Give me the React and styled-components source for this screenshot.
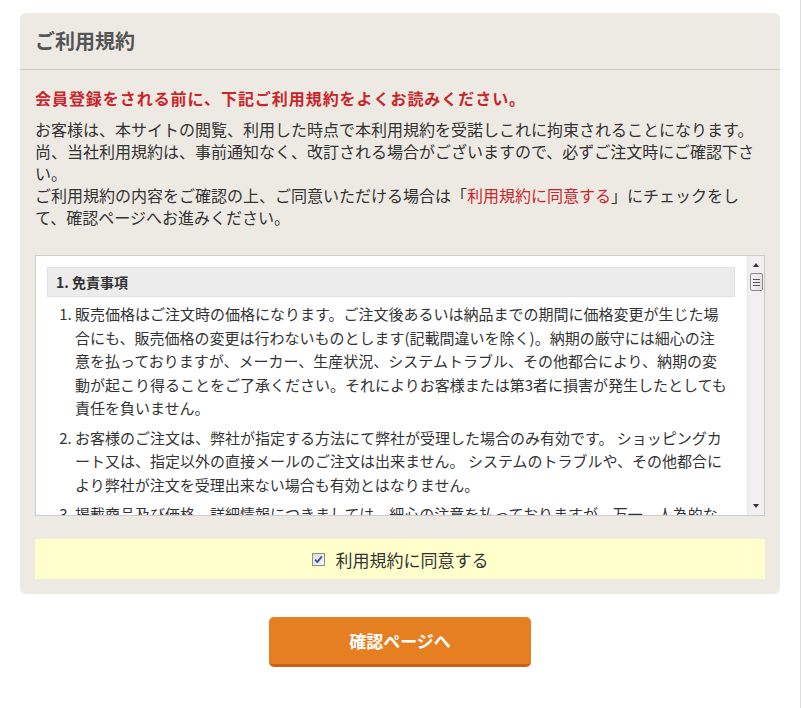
import React from 'react';
import styled, { createGlobalStyle } from 'styled-components';

const GlobalStyle = createGlobalStyle`
  html, body {
    margin: 0;
    padding: 0;
    background: #fff;
  }
  body {
    font-family: "Noto Sans CJK JP", "Noto Sans", sans-serif;
    color: #333;
  }
`;

const Page = styled.div`
  width: 760px;
  height: 708px;
  padding: 13px 20px 0;
  border-right: 1px solid #dcdcdc;
  box-sizing: content-box;
`;

const Panel = styled.section`
  background: #edeae3;
  border-radius: 6px;
`;

const PanelHeader = styled.h2`
  margin: 0;
  padding: 14px 15px;
  font-size: 20px;
  line-height: 28px;
  font-weight: bold;
  color: #555;
  border-bottom: 1px solid #cdc9c2;
`;

const PanelBody = styled.div`
  padding: 16px 15px 15px;
`;

const Warning = styled.p`
  margin: 0;
  font-size: 16px;
  line-height: 24px;
  font-weight: bold;
  letter-spacing: 0.95px;
  color: #c9252b;
`;

const Lead = styled.p`
  margin: 8px 0 0;
  font-size: 16px;
  line-height: 22px;
  color: #333;
`;

const Accent = styled.span`
  color: #c9252b;
`;

const ScrollBox = styled.div`
  display: flex;
  margin-top: 27px;
  height: 259px;
  background: #fff;
  border: 1px solid #cccccc;
`;

const ScrollContent = styled.div`
  flex: 1;
  overflow: hidden;
  padding: 11px 12px 0 11px;
`;

const TermsHeading = styled.h3`
  margin: 0;
  height: 28px;
  padding: 0 8px;
  line-height: 28px;
  font-size: 14px;
  font-weight: bold;
  color: #333;
  background: #ececec;
  border: 1px solid #e0e0e0;
`;

const TermsList = styled.ol`
  margin: 5px 0 0;
  padding: 0 7px 0 28px;
`;

const TermsItem = styled.li`
  font-size: 15px;
  line-height: 23.5px;
  color: #333;
  & + & {
    margin-top: 6px;
  }
`;

const ScrollTrack = styled.div`
  width: 17px;
  display: flex;
  flex-direction: column;
  align-items: center;
  background: #f0f0f0;
  border-left: 1px solid #e6e6e6;
  box-sizing: border-box;
`;

const Arrow = styled.span`
  width: 0;
  height: 0;
  margin: ${p => (p.$down ? 'auto 0 7px' : '7px 0 0')};
  border-left: 3.5px solid transparent;
  border-right: 3.5px solid transparent;
  ${p => (p.$down ? 'border-top: 4px solid #333;' : 'border-bottom: 4px solid #333;')}
`;

const Thumb = styled.span`
  margin-top: 6px;
  width: 13px;
  height: 18px;
  box-sizing: border-box;
  border: 1px solid #8a8a8a;
  border-radius: 2px;
  background: linear-gradient(to right, #f4f4f4, #e2e2e2);
  display: flex;
  flex-direction: column;
  justify-content: center;
  align-items: center;
  gap: 2px;
`;

const Grip = styled.span`
  width: 7px;
  height: 1px;
  background: #555;
`;

const AgreeRow = styled.label`
  margin-top: 23px;
  height: 40px;
  display: flex;
  align-items: center;
  justify-content: center;
  gap: 11px;
  background: #ffffcc;
  font-size: 17px;
  color: #333;
`;

const CheckBox = styled.span`
  width: 13px;
  height: 13px;
  box-sizing: border-box;
  border: 1px solid #8e8f8f;
  background: linear-gradient(135deg, #dcdcdc, #fbfbfb);
  display: flex;
  align-items: center;
  justify-content: center;
`;

const Actions = styled.div`
  display: flex;
  justify-content: center;
  padding-top: 23px;
`;

const SubmitButton = styled.button`
  width: 262px;
  height: 50px;
  border: none;
  border-bottom: 3px solid #c4621a;
  border-radius: 5px;
  background: #e67e22;
  color: #fff;
  font-family: inherit;
  font-size: 17px;
  font-weight: bold;
  cursor: pointer;
`;

const terms = [
  '販売価格はご注文時の価格になります。ご注文後あるいは納品までの期間に価格変更が生じた場合にも、販売価格の変更は行わないものとします(記載間違いを除く)。納期の厳守には細心の注意を払っておりますが、メーカー、生産状況、システムトラブル、その他都合により、納期の変動が起こり得ることをご了承ください。それによりお客様または第3者に損害が発生したとしても責任を負いません。',
  'お客様のご注文は、弊社が指定する方法にて弊社が受理した場合のみ有効です。 ショッピングカート又は、指定以外の直接メールのご注文は出来ません。 システムのトラブルや、その他都合により弊社が注文を受理出来ない場合も有効とはなりません。',
  '掲載商品及び価格、詳細情報につきましては、細心の注意を払っておりますが、万一、人為的な誤りがあった場合には、訂正させていただく場合がございます。',
  '商品の色合いは、お使いのモニター環境により実物と異なって見える場合がございます。'
];

function App() {
  return (
    <Page>
      <GlobalStyle />
      <Panel>
        <PanelHeader>ご利用規約</PanelHeader>
        <PanelBody>
          <Warning>会員登録をされる前に、下記ご利用規約をよくお読みください。</Warning>
          <Lead>
            お客様は、本サイトの閲覧、利用した時点で本利用規約を受諾しこれに拘束されることになります。
            <br />
            尚、当社利用規約は、事前通知なく、改訂される場合がございますので、必ずご注文時にご確認下さい。
            <br />
            ご利用規約の内容をご確認の上、ご同意いただける場合は「<Accent>利用規約に同意する</Accent>」にチェックをして、確認ページへお進みください。
          </Lead>

          <ScrollBox>
            <ScrollContent>
              <TermsHeading>1. 免責事項</TermsHeading>
              <TermsList>
                {terms.map(text => (
                  <TermsItem key={text}>{text}</TermsItem>
                ))}
              </TermsList>
            </ScrollContent>
            <ScrollTrack>
              <Arrow />
              <Thumb>
                <Grip />
                <Grip />
                <Grip />
              </Thumb>
              <Arrow $down />
            </ScrollTrack>
          </ScrollBox>

          <AgreeRow>
            <CheckBox>
              <svg width="9" height="9" viewBox="0 0 9 9">
                <path d="M1.2 4.6 L3.4 7 L7.8 1.4" fill="none" stroke="#3b4fa0" strokeWidth="1.8" />
              </svg>
            </CheckBox>
            利用規約に同意する
          </AgreeRow>
        </PanelBody>
      </Panel>
      <Actions>
        <SubmitButton type="button">確認ページへ</SubmitButton>
      </Actions>
    </Page>
  );
}

export default App;
